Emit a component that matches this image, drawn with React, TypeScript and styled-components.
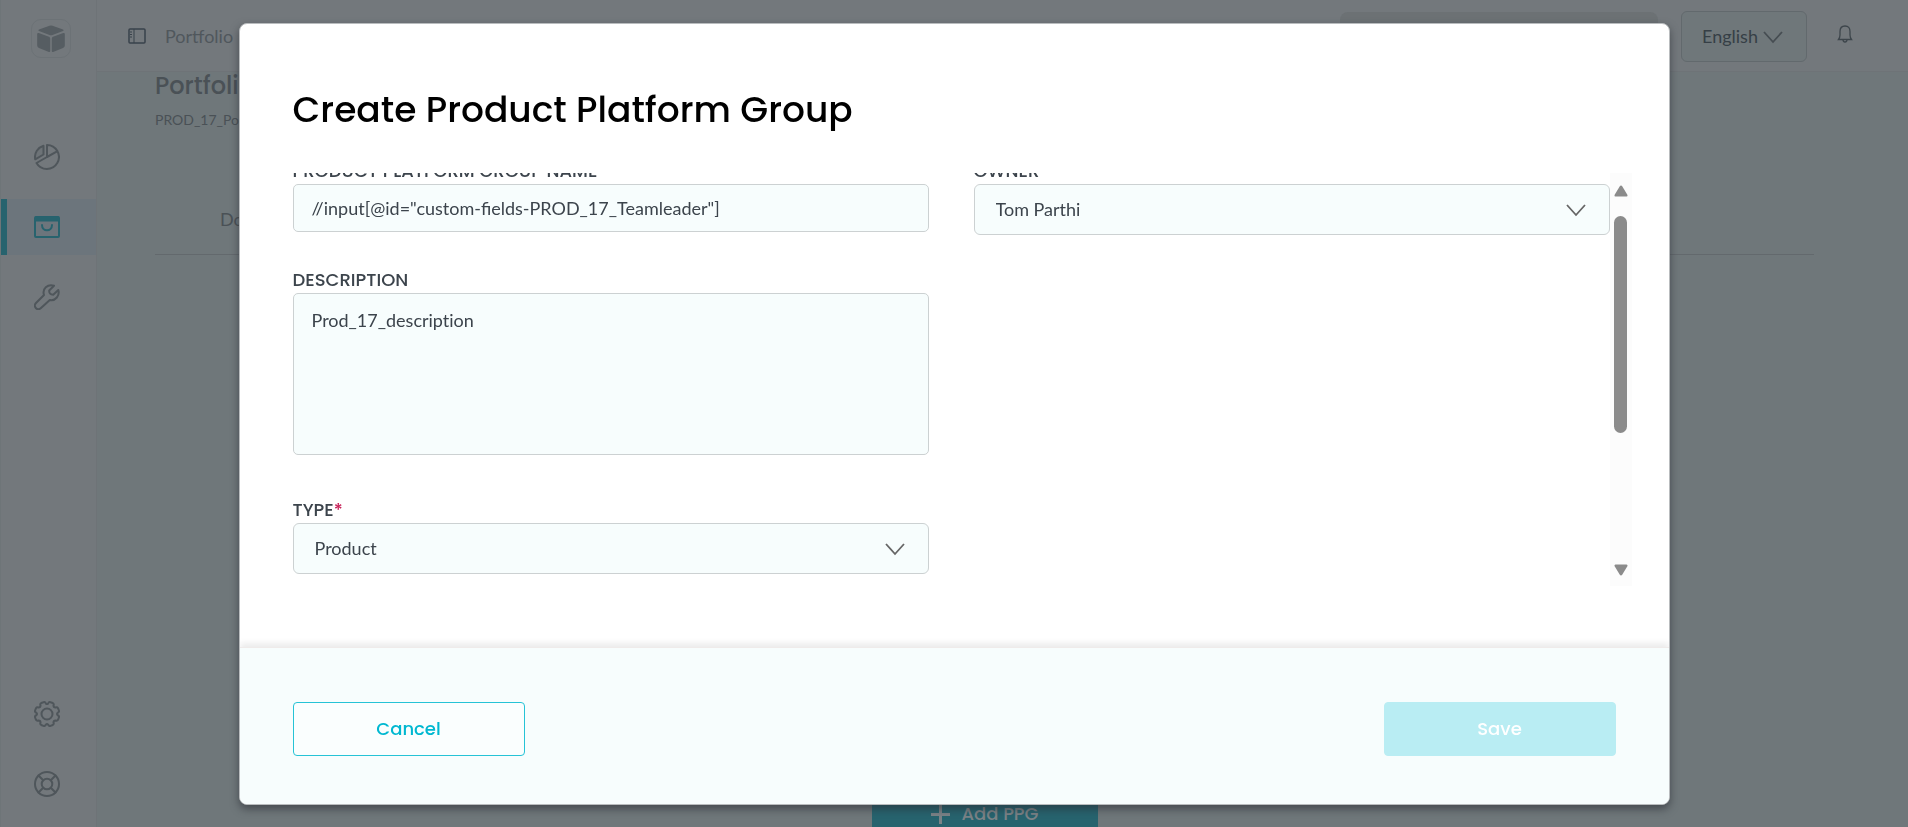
import React from 'react';
import styled, { createGlobalStyle } from 'styled-components';

const Global = createGlobalStyle`
  *, *::before, *::after { box-sizing: border-box; }
  html, body, #root { height: 100%; }
  body {
    margin: 0;
    overflow: hidden;
    font-family: Lato, "Liberation Sans", sans-serif;
    font-size: 18px;
    line-height: 24px;
    color: #3c444c;
    background: #6f777a;
  }
  button, input, select, textarea { font: inherit; color: inherit; margin: 0; }
`;

const Shell = styled.div`
  display: flex;
  height: 100%;
  background: #6f777a;
`;

const Sidebar = styled.nav`
  display: flex;
  flex-direction: column;
  flex: 0 0 97px;
  padding: 19px 0 1px;
  background: #73787c;
  border-left: 1px solid #6e7578;
  border-right: 1px solid #6e7377;
`;

const Logo = styled.a`
  display: grid;
  place-items: center;
  flex: none;
  width: 40px;
  height: 39px;
  margin: 0 0 71px 30px;
  border: 1px solid #6c7276;
  border-radius: 10px;
  color: #565d62;
`;

const NavLink = styled.a<{ $active?: boolean }>`
  display: flex;
  align-items: center;
  flex: none;
  height: 56px;
  margin-bottom: 14px;
  padding-left: ${p => (p.$active ? 27 : 33)}px;
  border-left: ${p => (p.$active ? '6px solid #27636e' : '0')};
  background: ${p => (p.$active ? '#6c757c' : 'transparent')};
  color: ${p => (p.$active ? '#27636e' : '#4f565b')};
`;

const Spacer = styled.div`
  flex: 1;
`;

const Page = styled.div`
  display: flex;
  flex-direction: column;
  flex: 1;
  min-width: 0;
`;

const TopBar = styled.header`
  display: flex;
  align-items: flex-start;
  flex: 0 0 72px;
  padding: 11px 55px 0 31px;
  background: #73787c;
  border-bottom: 1px solid #6e7377;
`;

const IconButton = styled.button`
  display: grid;
  place-items: center;
  padding: 0;
  border: 0;
  background: none;
  color: #3d454b;
`;

const PanelButton = styled(IconButton)`
  width: 18px;
  height: 50px;
`;

const BellButton = styled(IconButton)`
  width: 16px;
  height: 45px;
`;

const Crumb = styled.a`
  margin: 13px 0 0 19px;
  color: #50575c;
  text-decoration: none;
`;

const SearchInput = styled.input`
  width: 318px;
  height: 44px;
  margin: 1px 23px 0 0;
  border: 0;
  border-radius: 8px;
  background: #6c7174;
`;

const Language = styled.div`
  position: relative;
  width: 126px;
  height: 51px;
  margin-right: 30px;
`;

const LanguageSelect = styled.select`
  width: 100%;
  height: 100%;
  padding: 0 20px 2px;
  appearance: none;
  border: 1px solid #62696d;
  border-radius: 6px;
  background: #6f777a;
  color: #363f46;
`;

const Main = styled.main`
  display: flex;
  flex-direction: column;
  flex: 1;
  padding: 0 94px 0 58px;
  color: #4a5156;
`;

const PageTitle = styled.h1`
  margin: 0;
  font: 500 24px/28px Poppins, Inter, sans-serif;
`;

const Subtitle = styled.p`
  margin: 10px 0 0;
  font-size: 14px;
  line-height: 20px;
`;

const Tabs = styled.div`
  display: flex;
  height: 125px;
  padding: 77px 0 0 65px;
  border-bottom: 1px solid #63696d;
`;

const Tab = styled.a`
  color: inherit;
  text-decoration: none;
`;

const AddButton = styled.button`
  display: flex;
  align-items: center;
  justify-content: center;
  gap: 12px;
  align-self: center;
  flex: 0 0 50px;
  width: 226px;
  margin: auto 0 -12px;
  border: 0;
  background: #27636e;
  color: #7c8387;
  font: 500 18px/24px Poppins, Inter, sans-serif;
`;

const Overlay = styled.div`
  position: fixed;
  inset: 0;
  display: flex;
  padding: 23px 12.5% 22px;
`;

const Dialog = styled.section`
  display: flex;
  flex-direction: column;
  flex: 1;
  min-width: 0;
  overflow: hidden;
  background: #fff;
  border: 1px solid #b9bcbe;
  border-radius: 8px;
  box-shadow: 0 4px 8px rgba(40, 44, 50, 0.6);
`;

const Content = styled.div`
  display: flex;
  flex-direction: column;
  flex: 1;
  min-height: 0;
  padding: 62px 37px 61px 53px;
`;

const Heading = styled.h2`
  margin: 0 0 39px;
  font: 500 36px/48px Poppins, Inter, sans-serif;
  color: #000;
`;

const ScrollRow = styled.div`
  display: flex;
  flex: 1;
  min-height: 0;
`;

const Viewport = styled.div`
  flex: 1;
  min-width: 0;
  overflow: hidden;
`;

const Fields = styled.form`
  display: grid;
  grid-template-columns: 1fr 1fr;
  gap: 30px 45px;
  margin-top: -17px;
`;

const Field = styled.div<{ $column?: number }>`
  display: flex;
  flex-direction: column;
  grid-column: ${p => p.$column ?? 1};
`;

const Label = styled.label`
  padding-top: 2px;
  font: 500 18px/26px Poppins, "Noto Sans", sans-serif;
  color: #3c444c;
`;

const Required = styled.span`
  color: #c8235a;
`;

const TextInput = styled.input`
  height: 48px;
  padding: 0 18px;
  border: 1px solid #ccd1d2;
  border-radius: 5px;
  background: #f7fdfd;
`;

const TextArea = styled.textarea`
  height: 162px;
  margin-bottom: 10px;
  padding: 14px 18px;
  border: 1px solid #ccd1d2;
  border-radius: 5px;
  background: #f7fdfd;
  font-variant-ligatures: none;
  resize: none;
`;

const SelectBox = styled.div`
  position: relative;
  height: 51px;
`;

const Select = styled.select`
  width: 100%;
  height: 100%;
  padding: 0 21px 2px;
  appearance: none;
  border: 1px solid #ccd1d2;
  border-radius: 6px;
  background: #f7fdfd;
`;

const Arrow = styled.svg`
  position: absolute;
  top: calc(50% - 6px);
  right: 24px;
  pointer-events: none;
`;

const ScrollTrack = styled.div`
  display: flex;
  flex-direction: column;
  align-items: center;
  flex: 0 0 22px;
  padding: 12px 0 10px;
  background: #fcfcfc;
`;

const Thumb = styled.div`
  width: 13px;
  height: 217px;
  margin: 19px 0 auto;
  border-radius: 7px;
  background: #8b8b8b;
`;

const Footer = styled.footer`
  display: flex;
  align-items: center;
  justify-content: space-between;
  flex: 0 0 157px;
  padding: 6px 53px 0;
  background: #f7fdfd;
  border-top: 1px solid #efebea;
  box-shadow: 0 -4px 6px rgba(0, 0, 0, 0.08);
`;

const FooterButton = styled.button<{ $primary?: boolean }>`
  width: 232px;
  height: 54px;
  border: 1px solid ${p => (p.$primary ? '#b9edf3' : '#26c3d6')};
  border-radius: 4px;
  background: ${p => (p.$primary ? '#b9edf3' : '#fafefe')};
  color: ${p => (p.$primary ? '#fff' : '#00b8d1')};
  font: 500 18px/24px Poppins, Inter, sans-serif;
`;

const stroke = { fill: 'none', stroke: 'currentColor', strokeWidth: 2, strokeLinecap: 'round', strokeLinejoin: 'round' } as const;

const Chevron = ({ color }: { color: string }) => (
  <Arrow width="20" height="13" viewBox="0 0 20 13" fill="none" stroke={color} strokeWidth="1.800" aria-hidden="true">
    <path d="M1 1l9 10 9-10" />
  </Arrow>
);

const PieIcon = () => (
  <svg width="26" height="26" viewBox="0 0 26 26" {...stroke}>
    <path d="M13 1V13L2.500 19A12 12 0 1 0 13 1ZM13 13L23.500 7.200" />
    <path d="M9.500 1.800V10.500L1.200 15.300C0 9 4 3.500 9.500 1.800Z" fill="currentColor" fillOpacity="0.15" />
  </svg>
);

const StoreIcon = () => (
  <svg width="26" height="22" viewBox="0 0 26 22" {...stroke}>
    <rect x="1" y="1" width="24" height="20" rx="1" />
    <path d="M1 3h24" strokeWidth="5" strokeLinecap="butt" />
    <path d="M8 9c0 7 10 7 10 0" />
  </svg>
);

const WrenchIcon = () => (
  <svg width="26" height="26" viewBox="0 0 26 26" {...stroke}>
    <path d="M20 1.700L15.200 6.500Q15 10.700 19.200 10.800L24.300 6C26 11.500 21.500 17.200 15.800 16L7 24C5.200 25.600 3 25.300 1.800 24S.5 20.500 2 19L10 11C8 5 13.500-.3 20 1.700Z" />
  </svg>
);

const GearIcon = () => (
  <svg width="26" height="26" viewBox="1 1 26 26" {...stroke}>
    <path d="M10.500 2.200Q12 1.500 12.800 3.500Q14 4.600 15.200 3.500Q16 1.500 17.500 2.200L19.800 3Q21.200 3.800 20.500 5.500Q20.500 7.500 22.500 7.500Q24.200 6.800 25 8.200L25.900 10.500Q26.500 12 24.700 12.700Q23.400 14 24.700 15.300Q26.500 16 25.900 17.500L25 19.800Q24.200 21.200 22.500 20.500Q20.500 20.500 20.500 22.500Q21.200 24.200 19.800 25L17.500 25.900Q16 26.500 15.200 24.700Q14 23.500 12.800 24.700Q12 26.500 10.500 25.900L8.200 25Q6.800 24.200 7.500 22.500Q7.500 20.500 5.500 20.500Q3.800 21.200 3 19.800L2.100 17.500Q1.500 16 3.300 15.300Q4.600 14 3.300 12.700Q1.500 12 2.100 10.500L3 8.200Q3.800 6.800 5.500 7.500Q7.500 7.500 7.500 5.500Q6.800 3.800 8.200 3Z" />
    <circle cx="14" cy="14" r="5.500" />
  </svg>
);

const HelpIcon = () => (
  <svg width="26" height="26" viewBox="1 1 26 26" {...stroke}>
    <circle cx="14" cy="14" r="12" />
    <circle cx="14" cy="14" r="5.300" />
    <path d="M5.500 5.500l4.700 4.700M22.500 5.500l-4.700 4.700M5.500 22.500l4.700-4.700M22.500 22.500l-4.700-4.700" />
  </svg>
);

export default function App() {
  return (
    <>
      <Global />
      <Shell>
        <Sidebar aria-label="Main">
          <Logo href="#" aria-label="Home">
            <svg width="28" height="28" viewBox="0 0 28 28" fill="currentColor">
              <path d="M14 .5q.8 0 1.500.3L26 4.500q1.500.8 0 1.500L15.500 10q-1.500.5-3 0L2 6Q.5 5.200 2 4.500L12.500.8Q13.200.5 14 .5Z" />
              <path d="M.2 9q0-1.500 1.500-1L12 11.800q1.200.5 1.200 1.700V26q0 1.300-1.300.9L2 23Q.2 22.300.2 20.500Z" />
              <path d="M27.800 9q0-1.500-1.500-1L16 11.800q-1.200.5-1.200 1.700V26q0 1.300 1.300.9L26 23q1.800-.7 1.800-2.500Z" />
            </svg>
          </Logo>
          <NavLink href="#" aria-label="Dashboard"><PieIcon /></NavLink>
          <NavLink href="#" aria-label="Portfolio" $active><StoreIcon /></NavLink>
          <NavLink href="#" aria-label="Tools"><WrenchIcon /></NavLink>
          <Spacer />
          <NavLink href="#" aria-label="Settings"><GearIcon /></NavLink>
          <NavLink href="#" aria-label="Help"><HelpIcon /></NavLink>
        </Sidebar>
        <Page>
          <TopBar>
            <PanelButton aria-label="Toggle sidebar">
              <svg width="18" height="16" viewBox="0 0 18 16" fill="none" stroke="#39424b">
                <rect x="1" y="1" width="16" height="14" rx="1" strokeWidth="1.500" />
                <path d="M6 1v14M2 4h2M2 6.500h2M2 9h2" />
              </svg>
            </PanelButton>
            <Crumb href="#">Portfolio</Crumb>
            <Spacer />
            <SearchInput aria-label="Search" />
            <Language>
              <LanguageSelect aria-label="Language"><option>English</option></LanguageSelect>
              <Chevron color="#464d52" />
            </Language>
            <BellButton aria-label="Notifications">
              <svg width="16" height="18" viewBox="0 0 16 18" fill="none" stroke="currentColor" strokeWidth="1.300">
                <path d="M1.500 14.500h13Q13 12.500 13 10V6.500Q13 1 8 1T3 6.500V10Q3 12.500 1.500 14.500ZM6 14.500q0 2.500 2 2.500t2-2.500" />
              </svg>
            </BellButton>
          </TopBar>
          <Main>
            <PageTitle>Portfolio</PageTitle>
            <Subtitle>PROD_17_Portfolio</Subtitle>
            <Tabs><Tab href="#">Documents</Tab></Tabs>
            <AddButton>
              <svg width="19" height="19" viewBox="0 0 19 19" stroke="currentColor" strokeWidth="3"><path d="M9.500 0v19M0 9.500h19" /></svg>
              Add PPG
            </AddButton>
          </Main>
        </Page>
      </Shell>
      <Overlay>
        <Dialog role="dialog" aria-modal="true" aria-labelledby="dialog-title">
          <Content>
            <Heading id="dialog-title">Create Product Platform Group</Heading>
            <ScrollRow>
              <Viewport>
                <Fields>
                  <Field>
                    <Label htmlFor="name">PRODUCT PLATFORM GROUP NAME</Label>
                    <TextInput id="name" defaultValue={'//input[@id="custom-fields-PROD_17_Teamleader"]'} />
                  </Field>
                  <Field $column={2}>
                    <Label htmlFor="owner">OWNER</Label>
                    <SelectBox>
                      <Select id="owner"><option>Tom Parthi</option></Select>
                      <Chevron color="#666" />
                    </SelectBox>
                  </Field>
                  <Field>
                    <Label htmlFor="description">DESCRIPTION</Label>
                    <TextArea id="description" defaultValue="Prod_17_description" />
                  </Field>
                  <Field>
                    <Label htmlFor="type">TYPE<Required>*</Required></Label>
                    <SelectBox>
                      <Select id="type"><option>Product</option></Select>
                      <Chevron color="#666" />
                    </SelectBox>
                  </Field>
                </Fields>
              </Viewport>
              <ScrollTrack aria-hidden="true">
                <svg width="14" height="12" viewBox="0 0 14 12" fill="#8b8b8b"><path d="M7 .5q.8 0 1.200.8L13.500 10q.3 1.500-1 1.500h-11Q.2 11.500.5 10L5.800 1.300Q6.200.5 7 .5Z" /></svg>
                <Thumb />
                <svg width="14" height="12" viewBox="0 0 14 12" fill="#8b8b8b"><path d="M7 11.500q.8 0 1.200-.8L13.500 2q.3-1.500-1-1.500h-11Q.2.5.5 2l5.300 8.700q.4.800 1.200.8Z" /></svg>
              </ScrollTrack>
            </ScrollRow>
          </Content>
          <Footer>
            <FooterButton type="button">Cancel</FooterButton>
            <FooterButton type="button" $primary>Save</FooterButton>
          </Footer>
        </Dialog>
      </Overlay>
    </>
  );
}
